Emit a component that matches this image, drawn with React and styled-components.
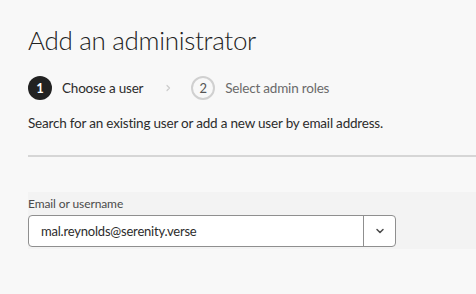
import styled, { createGlobalStyle } from "styled-components";

const GlobalStyle = createGlobalStyle`
  html, body {
    margin: 0;
    padding: 0;
    background: #f8f8f8;
  }
  body {
    font-family: "Lato", "Liberation Sans", sans-serif;
    color: #2c2c2c;
  }
`;

const Page = styled.div`
  width: 476px;
  height: 294px;
  overflow: hidden;
  padding: 23px 0 0 28px;
  box-sizing: border-box;
`;

const Title = styled.h1`
  margin: 0;
  font-size: 26px;
  font-weight: 300;
  letter-spacing: -0.3px;
  color: #222;
  line-height: 34px;
`;

const Steps = styled.div`
  display: flex;
  align-items: center;
  margin-top: 19px;
  height: 24px;
`;

const StepBadge = styled.span`
  width: 24px;
  height: 24px;
  box-sizing: border-box;
  border-radius: 50%;
  display: flex;
  align-items: center;
  justify-content: center;
  font-size: 13px;
  ${p =>
    p.active
      ? `
    background: #222;
    color: #fff;
    font-weight: 700;
  `
      : `
    border: 2px solid #d0d0d0;
    color: #555;
  `}
`;

const StepLabel = styled.span`
  margin-left: 10px;
  font-size: 13.5px;
  letter-spacing: -0.2px;
  color: ${p => (p.active ? "#2c2c2c" : "#6a6a6a")};
`;

const StepArrow = styled.span`
  margin: 0 18px 0 20px;
  display: flex;
  color: #cccccc;
`;

const Description = styled.p`
  margin: 15px 0 0;
  font-size: 13.5px;
  letter-spacing: -0.2px;
  color: #2c2c2c;
`;

const Divider = styled.hr`
  margin: 24px 0 0;
  border: 0;
  height: 2px;
  background: #d6d6d6;
`;

const FieldPanel = styled.div`
  margin-top: 35px;
  background: #f3f3f3;
  height: 57px;
  padding-top: 4px;
  box-sizing: border-box;
`;

const Label = styled.label`
  display: block;
  font-size: 12px;
  letter-spacing: -0.1px;
  color: #4b4b4b;
  line-height: 16px;
`;

const Combo = styled.div`
  display: flex;
  width: 368px;
  height: 32px;
  margin-top: 3px;
  border: 1px solid #8f8f8f;
  border-radius: 4px;
  box-sizing: border-box;
  background: #fff;
  overflow: hidden;
`;

const Input = styled.div`
  flex: 1;
  display: flex;
  align-items: center;
  padding-left: 12px;
  font-size: 13px;
  letter-spacing: -0.2px;
  color: #2c2c2c;
`;

const ComboButton = styled.div`
  width: 31px;
  border-left: 1px solid #8f8f8f;
  display: flex;
  align-items: center;
  justify-content: center;
  color: #4b4b4b;
`;

const Chevron = ({ dir = "down", size = 10 }) => (
  <svg width={size} height={size} viewBox="0 0 10 10" fill="none">
    <path
      d={dir === "down" ? "M2 3.5 L5 6.5 L8 3.5" : "M4 2.5 L6.5 5 L4 7.5"}
      stroke="currentColor"
      strokeWidth={dir === "down" ? 1.5 : 1.2}
      strokeLinecap="round"
      strokeLinejoin="round"
    />
  </svg>
);

export default function App() {
  return (
    <>
      <GlobalStyle />
      <Page>
        <Title>Add an administrator</Title>
        <Steps>
          <StepBadge active>1</StepBadge>
          <StepLabel active>Choose a user</StepLabel>
          <StepArrow>
            <Chevron dir="right" />
          </StepArrow>
          <StepBadge>2</StepBadge>
          <StepLabel>Select admin roles</StepLabel>
        </Steps>
        <Description>
          Search for an existing user or add a new user by email address.
        </Description>
        <Divider />
        <FieldPanel>
          <Label>Email or username</Label>
          <Combo>
            <Input>mal.reynolds@serenity.verse</Input>
            <ComboButton>
              <Chevron />
            </ComboButton>
          </Combo>
        </FieldPanel>
      </Page>
    </>
  );
}
